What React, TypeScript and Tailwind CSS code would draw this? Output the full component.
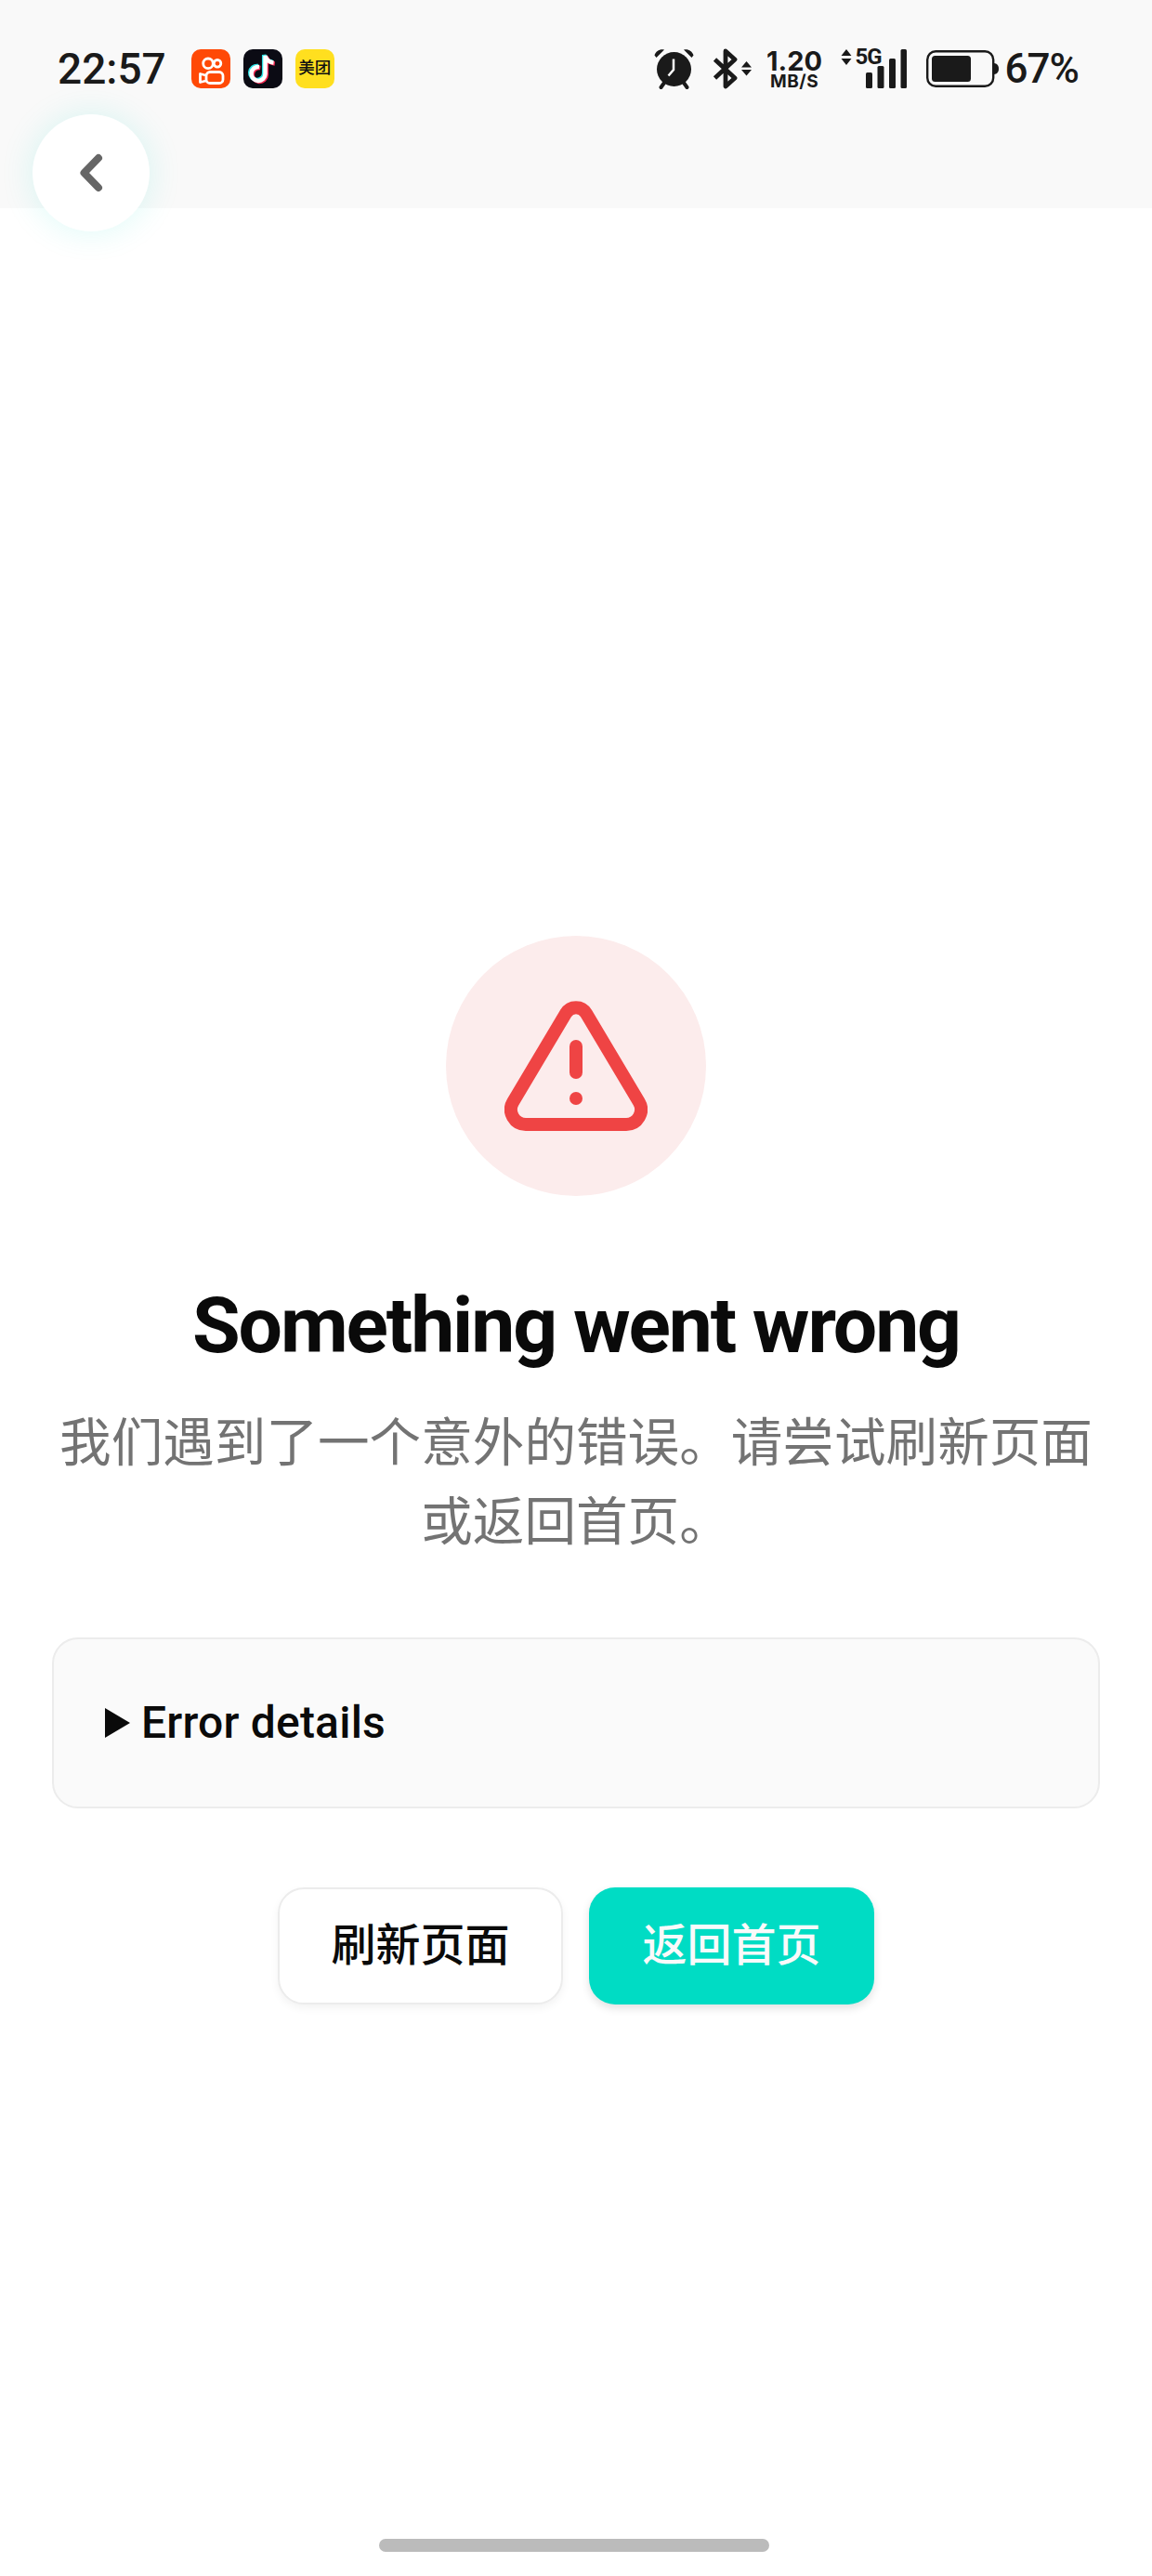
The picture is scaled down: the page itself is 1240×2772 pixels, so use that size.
const sans = "font-['Roboto','Noto_Sans_CJK_SC',sans-serif]";

const BackButton = () => (
  <button className="absolute left-[35px] top-[123px] flex size-[126px] items-center justify-center rounded-full bg-white shadow-[0_0_36px_rgba(0,220,196,0.14)]">
    <svg width="34" height="52" viewBox="0 0 34 52" fill="none">
      <path d="M25 10 9.500 26 25 42" stroke="#666666" strokeWidth="8" strokeLinecap="round" strokeLinejoin="round" />
    </svg>
  </button>
);

const AppIcons = () => (
  <div className="ml-[27px] flex gap-[14px]">
    <span className="flex size-[42px] items-center justify-center rounded-[10px] bg-[#ff4906]">
      <svg width="42" height="42" viewBox="0 0 42 42" fill="none" stroke="#ffffff" strokeWidth="2.800">
        <circle cx="18" cy="15.300" r="5.300" />
        <circle cx="28" cy="15.300" r="3.800" />
        <rect x="16" y="24.500" width="18" height="12" rx="4" />
        <path d="M15.500 28 9.500 26.500v9l6-1.500" strokeLinejoin="round" />
      </svg>
    </span>
    <span className="flex size-[42px] items-center justify-center rounded-[10px] bg-[#0b0b14]">
      <svg width="42" height="42" viewBox="0 0 42 42" fill="none" strokeWidth="4.500">
        <path d="M17 19a7.500 7.500 0 1 0 6.500 7.500V7c1 4 4 7 9 7.500" stroke="#2ce3e6" transform="translate(-1.300 -1)" />
        <path d="M17 19a7.500 7.500 0 1 0 6.500 7.500V7c1 4 4 7 9 7.500" stroke="#fb2c55" transform="translate(1.300 1)" />
        <path d="M17 19a7.500 7.500 0 1 0 6.500 7.500V7c1 4 4 7 9 7.500" stroke="#ffffff" />
      </svg>
    </span>
    <span className="flex size-[42px] items-center justify-center rounded-[10px] bg-[#ffdf1f]">
      <span className="text-[17.500px] font-medium leading-none text-[#111111]">美团</span>
    </span>
  </div>
);

const StatusIcons = () => (
  <div className="ml-auto flex items-center">
    <svg width="43" height="44" viewBox="0 0 43 44" fill="#1a1a1a">
      <path d="M.5 7.500C2 3 6 .5 11 1.500L2.500 10ZM42.500 7.500C41 3 37 .5 32 1.500L40.500 10Z" />
      <circle cx="21.500" cy="22.500" r="18.500" />
      <path d="M11 37 7.500 42M32 37l3.500 5" stroke="#1a1a1a" strokeWidth="4" strokeLinecap="round" />
      <path d="M21 11.500V23l-5.500 6.500" fill="none" stroke="#f9f9f9" strokeWidth="2.500" />
    </svg>
    <svg className="ml-[20px]" width="43" height="44" viewBox="0 0 43 44" fill="none">
      <path d="M2.500 12 24 32 14 41V3l10 9L2.500 32" stroke="#1a1a1a" strokeWidth="4.800" strokeLinejoin="round" />
      <path d="M31 20.500 36.500 14 42 20.500ZM31 23 36.500 29.500 42 23Z" fill="#1a1a1a" />
    </svg>
    <div className="ml-[14px] flex w-[63px] flex-col items-center font-['Inter',sans-serif] text-[#1a1a1a]">
      <span className="text-[29px] font-bold leading-[28px]">1.20</span>
      <span className="text-[19px] font-bold leading-[16px] tracking-[0.5px]">MB/S</span>
    </div>
    <svg className="ml-[18px]" width="12" height="44" viewBox="0 0 12 44" fill="#1a1a1a">
      <path d="M.500 8 6 1l5.500 7ZM.500 11 6 18l5.500-7Z" />
    </svg>
    <div className="relative ml-[4px] h-[44px] w-[55px]">
      <span className="absolute left-0 top-[-3px] text-[24px] font-bold leading-[24px] tracking-[-1px] text-[#1a1a1a]">5G</span>
      <svg className="absolute inset-0" width="55" height="44" viewBox="0 0 55 44" fill="#1a1a1a">
        <rect x="11" y="26" width="7" height="17" rx="1.500" />
        <rect x="23.500" y="19" width="7" height="24" rx="1.500" />
        <rect x="36" y="11" width="7" height="32" rx="1.500" />
        <rect x="48.500" y="1" width="6.500" height="42" rx="1.500" />
      </svg>
    </div>
    <svg className="ml-[21px]" width="78" height="40" viewBox="0 0 78 40" fill="none">
      <rect x="1.200" y="1.200" width="71" height="37.600" rx="9" stroke="#1a1a1a" strokeWidth="2.400" />
      <rect x="6" y="6" width="42" height="28" rx="3.500" fill="#1a1a1a" />
      <path d="M73 14c3 .5 5 2 5 6s-2 5.500-5 6Z" fill="#1a1a1a" />
    </svg>
    <span className="ml-[7px] text-[44px] font-medium leading-none tracking-[-1px] text-[#1a1a1a]">67%</span>
  </div>
);

const WarningIcon = () => (
  <svg width="154" height="140" viewBox="0 0 154 140" fill="none" stroke="#ef4444" strokeWidth="14" strokeLinecap="round">
    <path d="M66 13.500A12.700 12.700 0 0 1 88 13.500L144.900 109A16 16 0 0 1 131 133H23A16 16 0 0 1 9.100 109Z" strokeLinejoin="round" />
    <path d="M77 49V77" />
    <circle cx="77" cy="105" r="7" fill="#ef4444" stroke="none" />
  </svg>
);

export default function App() {
  return (
    <div className={`relative flex min-h-[2772px] flex-col items-center bg-white ${sans}`}>
      <header className="flex h-[224px] w-full items-start bg-[#f9f9f9] pl-[62px] pr-[79px] pt-[52px]">
        <div className="flex h-[44px] w-full items-center">
          <span className="text-[46px] font-medium leading-none text-[#1a1a1a]">22:57</span>
          <AppIcons />
          <StatusIcons />
        </div>
      </header>
      <BackButton />

      <main className="flex w-full flex-col items-center px-[56px] pt-[783px]">
        <div className="flex size-[280px] items-center justify-center rounded-full bg-[#fcecec]">
          <WarningIcon />
        </div>
        <h1 className="mt-[88px] text-[84px] font-bold leading-[104px] tracking-[-2.100px] text-[#0a0a0a]">
          Something went wrong
        </h1>
        <p className="mt-[32px] text-center text-[55.600px] leading-[85px] text-[#737373]">
          我们遇到了一个意外的错误。请尝试刷新页面或返回首页。
        </p>
        <div className="mt-[81px] flex h-[184px] w-full items-center gap-[12px] rounded-[28px] border-2 border-[#ececec] bg-[#fafafa] px-[55px]">
          <span className="h-0 w-0 border-y-[16px] border-l-[27px] border-y-transparent border-l-[#0a0a0a]" />
          <span className="text-[48px] font-medium leading-none tracking-[0.2px] text-[#0a0a0a]">Error details</span>
        </div>
        <div className="mt-[85px] flex gap-[28px]">
          <button className="h-[126px] w-[307px] rounded-[28px] border-2 border-[#ececec] bg-white text-[48px] font-medium text-[#0a0a0a] shadow-[0_4px_10px_rgba(0,0,0,0.05)]">
            刷新页面
          </button>
          <button className="h-[126px] w-[307px] rounded-[28px] bg-[#00dcc4] text-[48px] font-medium text-[#fafafa] shadow-[0_4px_10px_rgba(0,0,0,0.12)]">
            返回首页
          </button>
        </div>
      </main>

      <div className="mb-[26px] mr-[4px] mt-auto h-[14px] w-[420px] rounded-full bg-[#bbbbbb]" />
    </div>
  );
}
